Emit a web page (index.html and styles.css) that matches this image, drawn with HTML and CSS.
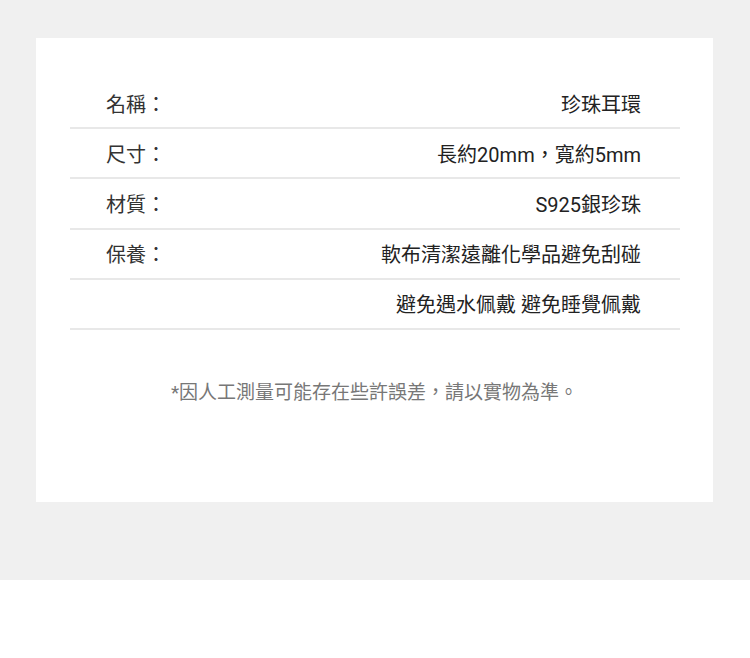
FILE: index.html
```html
<!DOCTYPE html>
<html lang="zh-Hant">

<head>
    <meta charset="UTF-8">
    <meta name="viewport" content="width=device-width, initial-scale=1.0">
    <title>商品規格</title>
    <link rel="stylesheet" href="styles.css">
</head>

<body>
    <div class="page">
        <div class="spec-card">
            <div class="spec-table">
                <div class="spec-row">
                    <span class="spec-label">名稱：</span>
                    <span class="spec-value">珍珠耳環</span>
                </div>
                <div class="spec-row">
                    <span class="spec-label">尺寸：</span>
                    <span class="spec-value">長約20mm，寬約5mm</span>
                </div>
                <div class="spec-row">
                    <span class="spec-label">材質：</span>
                    <span class="spec-value">S925銀珍珠</span>
                </div>
                <div class="spec-row">
                    <span class="spec-label">保養：</span>
                    <span class="spec-value">軟布清潔遠離化學品避免刮碰</span>
                </div>
                <div class="spec-row">
                    <span class="spec-label"></span>
                    <span class="spec-value">避免遇水佩戴 避免睡覺佩戴</span>
                </div>
            </div>

            <p class="spec-note">*因人工測量可能存在些許誤差，請以實物為準。</p>
        </div>
    </div>
</body>

</html>
```

FILE: styles.css
```css
* {
    margin: 0;
    padding: 0;
    box-sizing: border-box;
    font-family: Roboto, "Noto Sans CJK TC", sans-serif;
}

body {
    background-color: #ffffff;
    color: #333333;
}

.page {
    background-color: #f0f0f0;
    height: 580px;
    padding: 38px 37px 0 36px;
}

.spec-card {
    background-color: #ffffff;
    height: 464px;
    padding-top: 41px;
}

.spec-table {
    margin: 0 33px 0 34px;
}

.spec-row {
    display: flex;
    align-items: center;
    justify-content: space-between;
    height: 50px;
    padding: 0 39px 0 36px;
    border-bottom: 2px solid #e8e8e8;
}

.spec-row + .spec-row {
    height: 50.25px;
}

.spec-label {
    font-size: 20px;
    color: #333333;
}

.spec-value {
    font-size: 20px;
    color: #222222;
    text-align: right;
}

.spec-note {
    margin-top: 50px;
    text-align: center;
    font-size: 19px;
    line-height: 26px;
    color: #777777;
}
```
